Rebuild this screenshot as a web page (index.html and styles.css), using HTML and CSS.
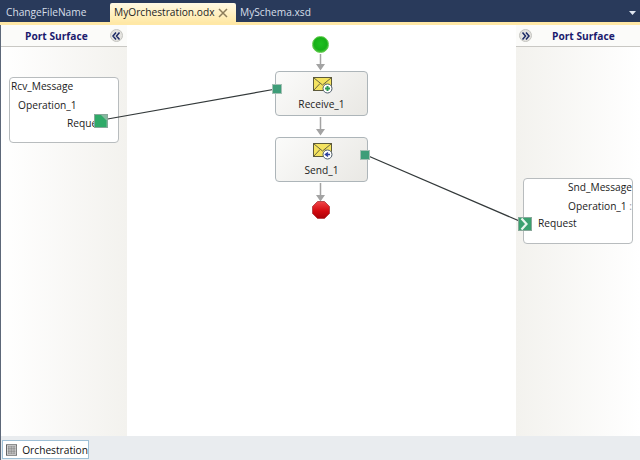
FILE: index.html
```html
<!DOCTYPE html>
<html lang="en">
<head>
<meta charset="utf-8">
<title>MyOrchestration.odx</title>
<link rel="stylesheet" href="styles.css">
</head>
<body>
<div class="app">
  <nav class="tabs">
    <div class="tab first">ChangeFileName</div>
    <div class="tab active">MyOrchestration.odx<svg class="close" width="10" height="10" viewBox="0 0 10 10"><path d="M1 1l8 8M9 1l-8 8" stroke="#8c7d5c" stroke-width="1.5" fill="none"/></svg></div>
    <div class="tab">MySchema.xsd</div>
    <svg class="dropdown" width="7" height="4" viewBox="0 0 7 4"><path d="M0 0h7L3.500 4z" fill="#dfe6f0"/></svg>
  </nav>
  <div class="strip"></div>
  <main class="designer">
    <aside class="surface left">
      <header class="surface-head">
        <span class="surface-title">Port Surface</span>
        <span class="collapse"><svg width="10" height="10" viewBox="0 0 10 10"><path d="M5 1.500L2 5l3 3.500M8.500 1.500L5.500 5l3 3.500" stroke="#1c2a66" stroke-width="1.500" fill="none"/></svg></span>
      </header>
    </aside>
    <section class="canvas"></section>
    <aside class="surface right">
      <header class="surface-head">
        <span class="collapse"><svg width="10" height="10" viewBox="0 0 10 10"><path d="M1.500 1.500L4.500 5l-3 3.500M5 1.500L8 5l-3 3.500" stroke="#1c2a66" stroke-width="1.500" fill="none"/></svg></span>
        <span class="surface-title">Port Surface</span>
      </header>
    </aside>

    <svg class="wires" width="640" height="411" viewBox="0 25 640 411">
      <path d="M102 120L276 89" stroke="#33393a" stroke-width="1.200" fill="none"/>
      <path d="M366 155L524 223" stroke="#33393a" stroke-width="1.200" fill="none"/>
      <g fill="#a3a3a3">
        <path d="M320.500 54V66M320.500 117V130M320.500 183V196" fill="none" stroke="#a3a3a3" stroke-width="1.500"/>
        <path d="M316 64h9l-4.500 6.500zM316 129h9l-4.500 6.500zM316 195h9l-4.500 6.500z"/>
      </g>
    </svg>

    <div class="port-card rcv">
      <div class="port-name">Rcv_Message</div>
      <div class="port-op">Operation_1</div>
      <div class="port-req">Reque</div>
    </div>
    <div class="port-card snd">
      <div class="port-name">Snd_Message</div>
      <div class="port-op">Operation_1 <span class="dots">:</span></div>
      <div class="port-req">Request</div>
    </div>

    <div class="start"></div>
    <div class="shape receive">
      <svg class="msg" width="20" height="17" viewBox="0 0 20 17">
        <rect x=".5" y=".5" width="18" height="13" fill="#f4e35f" stroke="#5c5a3a"/>
        <path d="M1 1l8.500 7L18 1M1 13l6-6.500M18 13l-6-6.500" stroke="#6a6540" fill="none"/>
        <circle cx="14.500" cy="11.500" r="4.500" fill="#fff" stroke="#50606e"/>
        <path d="M12 11.500h5M14.500 9v5" stroke="#2f9a55" stroke-width="2"/>
      </svg>
      <div class="shape-label">Receive_1</div>
    </div>
    <div class="shape send">
      <svg class="msg" width="20" height="17" viewBox="0 0 20 17">
        <rect x=".5" y=".5" width="18" height="13" fill="#f4e35f" stroke="#5c5a3a"/>
        <path d="M1 1l8.500 7L18 1M1 13l6-6.500M18 13l-6-6.500" stroke="#6a6540" fill="none"/>
        <circle cx="14.500" cy="11.500" r="4.500" fill="#fff" stroke="#50606e"/>
        <path d="M17 11.500h-4M15 9.500l-2.500 2 2.500 2" stroke="#2b3f9e" stroke-width="1.500" fill="none"/>
      </svg>
      <div class="shape-label">Send_1</div>
    </div>
    <svg class="stop" width="18" height="18" viewBox="0 0 18 18">
      <defs><linearGradient id="red" x1="0" y1="0" x2="0" y2="1"><stop offset="0" stop-color="#f0474a"/><stop offset=".55" stop-color="#d40a10"/><stop offset="1" stop-color="#a80006"/></linearGradient></defs>
      <path d="M5.500.5h7l5 5v7l-5 5h-7l-5-5v-7z" fill="url(#red)" stroke="#b8464a"/>
    </svg>

    <span class="pin pin-big pin-rcv"><svg width="14" height="14" viewBox="0 0 14 14"><path d="M1 1h6l5.500 5.500V13H1z" fill="#2faa68"/></svg></span>
    <span class="pin pin-big pin-snd"><svg width="14" height="14" viewBox="0 0 14 14"><path d="M3.500 1.500l5 5.500-5 5.500" stroke="#e8f6ee" stroke-width="2.200" fill="none"/></svg></span>
    <span class="pin pin-small pin-recv"></span>
    <span class="pin pin-small pin-send"></span>
  </main>
  <footer class="bottom">
    <div class="view-tab">
      <svg width="14" height="14" viewBox="0 0 14 14"><rect x=".5" y=".5" width="13" height="13" fill="#e8e8e8" stroke="#444"/><path d="M2 3h10M2 5h10M2 7h10M2 9h10M2 11h10M3 2v10M5 2v10M7 2v10M9 2v10M11 2v10" stroke="#777" stroke-width=".7"/></svg>
      <span>Orchestration</span>
    </div>
  </footer>
</div>
</body>
</html>
```

FILE: styles.css
```css
* { box-sizing: border-box; }
html, body { margin: 0; padding: 0; }
body { width: 640px; height: 460px; overflow: hidden; font-family: "Open Sans", "Noto Sans", sans-serif; background: #fff; }
.app { width: 640px; height: 460px; display: flex; flex-direction: column; }

.tabs { height: 22px; flex: none; display: flex; align-items: flex-end; background: #293a5b; position: relative; }
.tab { height: 19px; padding: 0 0 0 4px; font-size: 10.200px; line-height: 18px; color: #d7dfe9; white-space: nowrap; }
.tab.first { width: 110px; padding-left: 6px; }
.tab.active { width: 126px; background: linear-gradient(#fff9e4, #ffe9a8); color: #1d1d1d; border-radius: 2px 2px 0 0; display: flex; align-items: flex-start; justify-content: space-between; padding-right: 8px; }
.tab.active .close { margin-top: 5px; }
.dropdown { position: absolute; right: 4px; top: 11px; }
.strip { height: 3px; flex: none; background: #ffe8a6; }

.designer { flex: 1; display: flex; position: relative; background: #fff; }
.surface { width: 127px; flex: none; background: linear-gradient(90deg, #fff, #f3f2ee); }
.surface.left { border-left: 1px solid #5d6879; }
.surface.right { width: 124px; background: linear-gradient(90deg, #f3f2ee, #fff); }
.canvas { flex: 1; background: #fff; }
.surface-head { height: 22px; display: flex; align-items: center; border-bottom: 1px solid #c9c8c4; background: #fbfbf9; }
.surface-title { font-size: 10.200px; font-weight: bold; color: #1b1a6e; }
.left .surface-head { padding-left: 24px; gap: 22px; }
.right .surface-head { padding-left: 3px; gap: 20px; }
.collapse { width: 13px; height: 13px; border-radius: 50%; background: #e4e3df; border: 1px solid #c4c4c0; display: flex; align-items: center; justify-content: center; }

.wires { position: absolute; left: 0; top: 0; z-index: 2; pointer-events: none; }

.port-card { position: absolute; width: 110px; background: #fff; border: 1px solid #b8bcbe; border-radius: 4px; font-size: 10.200px; color: #1c1c1c; overflow: hidden; }
.rcv { left: 9px; top: 52px; height: 66px; padding: 2px 0 0 1px; }
.rcv .port-op { padding: 6px 0 0 7px; }
.rcv .port-req { padding: 5px 0 0 56px; }
.snd { left: 523px; top: 153px; height: 66px; text-align: right; padding: 2px 0 0; }
.snd .port-name, .snd .port-op { white-space: nowrap; }
.snd .port-op { padding-top: 6px; }
.snd .port-req { text-align: left; padding: 4px 0 0 14px; }
.port-name, .port-op, .port-req { line-height: 13px; }
.dots { color: #999; }

.pin { position: absolute; z-index: 3; background: #86b89f; border: 1px solid #88a89a; }
.pin svg { display: block; margin: -1px; }
.pin-big { width: 14px; height: 14px; }
.pin-small { width: 10px; height: 10px; background: #3e9d78; border-color: #a4c0b4; }
.pin-rcv { left: 94px; top: 89px; }
.pin-snd { left: 518px; top: 192px; background: #3aa16f; }
.pin-recv { left: 272px; top: 59px; }
.pin-send { left: 360px; top: 125px; }

.start { position: absolute; z-index: 3; left: 312px; top: 11px; width: 17px; height: 17px; border-radius: 50%; background: radial-gradient(circle at 50% 45%, #1fc01f 0, #17b017 55%, #79d864 100%); border: 1px solid #5fc94a; }
.shape { position: absolute; z-index: 3; left: 275px; width: 93px; height: 45px; border: 1px solid #adb5b9; border-radius: 4px; background: linear-gradient(135deg, #fbfbfa, #e9e8e4); display: flex; flex-direction: column; align-items: center; }
.receive { top: 46px; }
.send { top: 112px; }
.msg { margin-top: 5px; margin-left: 3px; }
.shape-label { font-size: 10.200px; line-height: 13px; color: #1c1c1c; margin-top: 4px; }
.stop { position: absolute; z-index: 3; left: 312px; top: 176px; }

.bottom { height: 24px; flex: none; background: #e9ecef; padding: 4px 0 0 1px; border-left: 1px solid #5d6879; }
.view-tab { width: 87px; height: 19px; display: flex; align-items: center; gap: 5px; padding-left: 3px; background: #fff; border: 1px solid #9fc0d6; font-size: 10.200px; color: #111; }
```
